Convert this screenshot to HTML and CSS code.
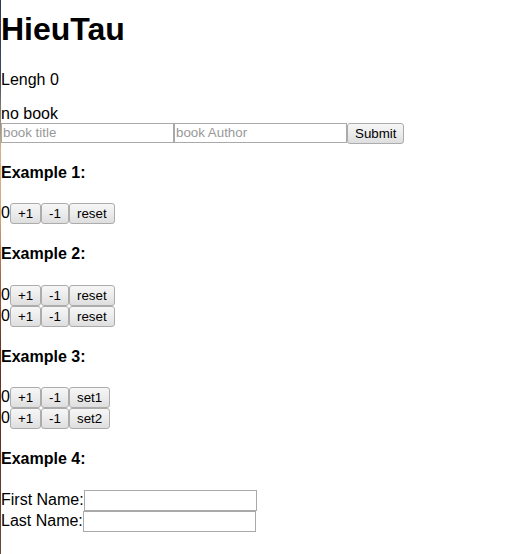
FILE: index.html
```html
<!DOCTYPE html>
<html lang="en">
<head>
<meta charset="utf-8">
<title>HieuTau</title>
<link rel="stylesheet" href="styles.css">
</head>
<body>
<div class="app">
  <h1 class="title">HieuTau</h1>
  <p class="length">Lengh 0</p>
  <div class="book-list">no book</div>
  <form class="book-form">
    <input class="field book-field" type="text" placeholder="book title"><input class="field book-field" type="text" placeholder="book Author"><button class="btn" type="button">Submit</button>
  </form>

  <h4 class="example example-first">Example 1:</h4>
  <div class="counter">0<button class="btn" type="button">+1</button><button class="btn" type="button">-1</button><button class="btn" type="button">reset</button></div>

  <h4 class="example">Example 2:</h4>
  <div class="counter">0<button class="btn" type="button">+1</button><button class="btn" type="button">-1</button><button class="btn" type="button">reset</button></div>
  <div class="counter">0<button class="btn" type="button">+1</button><button class="btn" type="button">-1</button><button class="btn" type="button">reset</button></div>

  <h4 class="example">Example 3:</h4>
  <div class="counter">0<button class="btn" type="button">+1</button><button class="btn" type="button">-1</button><button class="btn" type="button">set1</button></div>
  <div class="counter">0<button class="btn" type="button">+1</button><button class="btn" type="button">-1</button><button class="btn" type="button">set2</button></div>

  <h4 class="example">Example 4:</h4>
  <div class="name-row">First Name:<input class="field name-field" type="text"></div>
  <div class="name-row">Last Name:<input class="field name-field" type="text"></div>
</div>
</body>
</html>
```

FILE: styles.css
```css
html, body {
  margin: 0;
  padding: 0;
  background: #ffffff;
}

body {
  font-family: "Liberation Sans", Arial, sans-serif;
  font-size: 16px;
  color: #000000;
}

.app {
  display: flow-root;
  min-height: 100vh;
  box-sizing: border-box;
  border-left: 1px solid #5a3a30;
  border-image: linear-gradient(to bottom, #2c3856 0%, #3d4863 14%, #8c8677 21%, #d2b08a 27%, #d9a87a 38%, #b07050 48%, #6a3424 62%, #5e3428 80%, #6d4a3c 100%) 1;
}

.title {
  margin: 11px 0 22.5px;
  font-size: 32px;
  font-weight: bold;
}

.length {
  margin: 0 0 16px;
}

.book-list {
  line-height: normal;
}

.book-form {
  display: flex;
  align-items: flex-start;
  margin: 0;
}

.field {
  box-sizing: border-box;
  width: 173px;
  margin: 0;
  padding: 0 1px;
  border: 1px solid #a9a9a9;
  font-family: "Liberation Sans", Arial, sans-serif;
  font-size: 13.33px;
  color: #000;
  background: #fff;
  vertical-align: baseline;
}

.field::placeholder {
  color: #999999;
}

.book-field {
  height: 20px;
}

.name-field {
  height: 21px;
}

.btn {
  box-sizing: border-box;
  height: 21px;
  margin: 0;
  padding: 1px 7px;
  border: 1px solid #acacac;
  border-radius: 3px;
  background: linear-gradient(to bottom, #f6f6f6 0%, #ececec 50%, #dedede 100%);
  font-family: "Liberation Sans", Arial, sans-serif;
  font-size: 13.33px;
  color: #000;
}

.example {
  margin: 21.28px 0;
  font-size: 16px;
  font-weight: bold;
}

.example-first {
  margin-top: 20.28px;
}
```
